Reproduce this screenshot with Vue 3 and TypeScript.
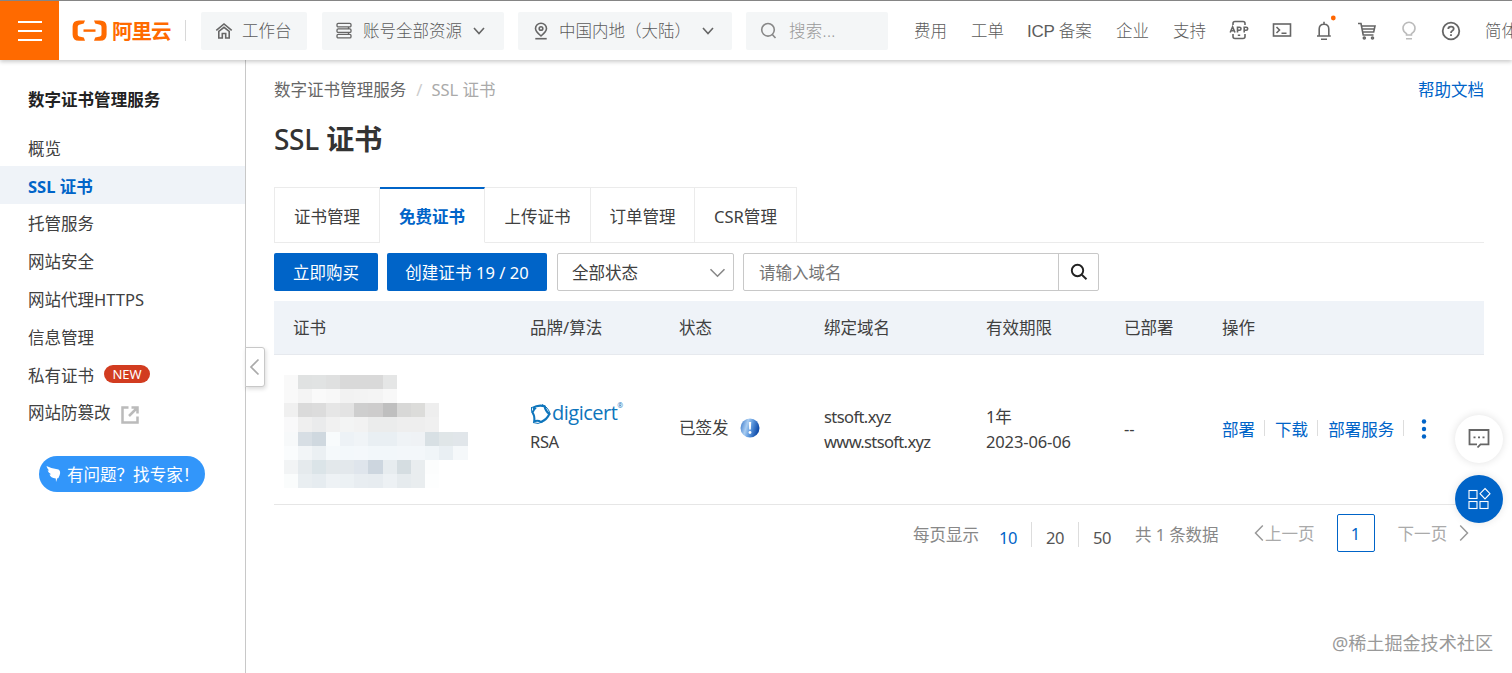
<script setup lang="ts">
interface MenuItem {
  label: string
  active?: boolean
  badge?: string
  external?: boolean
}

const menu: MenuItem[] = [
  { label: '概览' },
  { label: 'SSL 证书', active: true },
  { label: '托管服务' },
  { label: '网站安全' },
  { label: '网站代理HTTPS' },
  { label: '信息管理' },
  { label: '私有证书', badge: 'NEW' },
  { label: '网站防篡改', external: true },
]

const tabs: { label: string; cls: string }[] = [
  { label: '证书管理', cls: 't1' },
  { label: '免费证书', cls: 't2 active' },
  { label: '上传证书', cls: 't3' },
  { label: '订单管理', cls: 't4' },
  { label: 'CSR管理', cls: 't5' },
]

const columns: string[] = ['证书', '品牌/算法', '状态', '绑定域名', '有效期限', '已部署', '操作']

// Pixelated cover over the private certificate name and ids
const mosaic: string[][] = [
  ['f9f9f9', 'e0e2e2', 'e1e3e3', 'dfe0e0', 'd9d9d9', 'd9d9d9', 'd9d9d9', 'e5e6e6', 'fff', 'fff', 'fff', 'fff', 'fff'],
  ['f9f9f9', 'f4f4f4', 'fafafa', 'f8f8f8', 'f2f2f2', 'f3f3f3', 'f4f4f4', 'f8f8f8', 'fff', 'fff', 'fff', 'fff', 'fff'],
  ['f0f0f0', 'dadada', 'dcdcdc', 'e6e6e6', 'e3e3e3', 'cecece', 'cdcccc', 'bfbfbf', 'd8d8d7', 'dcdcda', 'eeeeee', 'fff', 'fff'],
  ['f9f9fa', 'efefef', 'eaebec', 'f1f1f1', 'f3f4f4', 'f2f2f2', 'ebecec', 'ebecec', 'eeeeee', 'eeeeee', 'f0f0f0', 'fff', 'fff'],
  ['f7f9fa', 'd7dee4', 'cfd8df', 'f8fbfc', 'edf2f6', 'f0f4f7', 'e9eff3', 'e9eff3', 'eff3f6', 'eff2f5', 'd8e0e4', 'e0e6e8', 'e1e6ea'],
  ['fafcfd', 'f2f5f7', 'ebf0f3', 'f5f9fb', 'f3f8fb', 'f4f8fb', 'f2f7fa', 'f2f7fa', 'f3f7fa', 'f3f7fa', 'f0f5f8', 'e9eff3', 'f5f8fa'],
  ['f2f4f5', 'e5eaed', 'dbe4e8', 'e3e8eb', 'e3e8ec', 'dfe5ec', 'cdd6df', 'e7ecef', 'd5dde1', 'e9edef', 'fcfdfd', 'fff', 'fff'],
  ['fafcfc', 'e9eef1', 'e6ecf0', 'eef2f5', 'ecf1f4', 'e8edf1', 'e7ecf0', 'edf1f4', 'e6ebee', 'e9edef', 'fdfefe', 'fff', 'fff'],
]
</script>

<template>
  <div class="page">
    <header class="top">
      <div class="burger"><i></i><i></i><i></i></div>
      <div class="logo">
        <svg width="35" height="24" viewBox="0 0 35 24">
          <path d="M13 1.400H7Q0.600 1.400 0.600 7.500V15.500Q0.600 21.800 7 21.800H13L11.800 18.600L7.200 17.500Q5.700 17.100 5.700 15.500V7.700Q5.700 6.100 7.200 5.700L11.800 4.600Z" />
          <path d="M22 1.400H28Q34.600 1.400 34.600 7.500V15.500Q34.600 21.800 28 21.800H22L23.200 18.600L28 17.500Q29.500 17.100 29.500 15.500V7.700Q29.500 6.100 28 5.700L23.200 4.600Z" />
          <rect x="11.500" y="10.400" width="12" height="2.400" />
        </svg>
        <span>阿里云</span>
      </div>
      <div class="vline"></div>
      <div class="pill p1">
        <svg width="18" height="18" viewBox="0 0 18 18" class="ln">
          <path d="M1.300 8.400L9 2L16.700 8.400" /><path d="M3.800 9.500V16H7.300V11.500H10.700V16H14.200V9.500L9 5.300Z" />
        </svg>
        <span>工作台</span>
      </div>
      <div class="pill p2">
        <svg width="18" height="18" viewBox="0 0 18 18" class="ln thinner">
          <rect x="2" y="1.300" width="14" height="3.600" rx="1.200" /><rect x="2" y="6.800" width="14" height="3.600" rx="1.200" /><rect x="2" y="12.300" width="14" height="3.600" rx="1.200" /><path d="M13.500 5V7M13.500 10.500V12.500" />
        </svg>
        <span>账号全部资源</span>
        <svg class="ln chev" width="12" height="8" viewBox="0 0 12 8"><path d="M1 1L6 6.500L11 1" /></svg>
      </div>
      <div class="pill p3">
        <svg width="18" height="18" viewBox="0 0 18 18" class="ln">
          <path d="M9 14Q3.500 9.500 3.500 6.500A5.500 5.300 0 0 1 14.500 6.500Q14.500 9.500 9 14Z" /><circle cx="9" cy="6.500" r="1.800" /><path d="M3.300 16.700H14.700" />
        </svg>
        <span>中国内地（大陆）</span>
        <svg class="ln chev" width="12" height="8" viewBox="0 0 12 8"><path d="M1 1L6 6.500L11 1" /></svg>
      </div>
      <div class="pill p4">
        <svg width="17" height="17" viewBox="0 0 17 17" class="ln"><circle cx="8" cy="7.800" r="6.300" /><path d="M12.300 12.500L15.500 16" /></svg>
        <span>搜索...</span>
      </div>
      <nav class="links">
        <span class="l1">费用</span><span class="l2">工单</span><span class="l3"><b>ICP</b> 备案</span><span class="l4">企业</span><span class="l5">支持</span>
      </nav>
      <div class="icons">
        <svg class="ln i-app" width="20" height="20" viewBox="0 0 20 20">
          <path d="M4 5V3.500Q4 1.500 6 1.500H14Q16 1.500 16 3.500V5M4 14V16.500Q4 18.500 6 18.500H14Q16 18.500 16 16.500V14M8.800 15.300H11.200" />
          <path d="M1.200 12.500L3.600 6.800L6 12.500M2 10.800H5.200M8.500 12.500V7.200H10.500Q12 7.200 12 8.700T10.500 10.200H8.500M15.200 12.500V7.200H17.200Q18.700 7.200 18.700 8.700T17.200 10.200H15.200" />
        </svg>
        <svg class="ln i-cli" width="20" height="16" viewBox="0 0 20 16">
          <rect x="1.500" y="2" width="17" height="12" /><path d="M4.500 5L7.500 8L4.500 11M9.500 11.200H14.500" />
        </svg>
        <svg class="ln i-bell" width="22" height="28" viewBox="0 0 22 28">
          <path d="M2 21H15.800M4.200 21V14Q4.200 9.200 9 9.200Q13.800 9.200 13.800 14V21M9 9V6.800M6 24.300H12" />
          <circle cx="18.300" cy="3" r="2.400" class="dot" />
        </svg>
        <svg class="ln i-cart" width="20" height="20" viewBox="0 0 20 20">
          <path d="M1 2.500H4L6.200 14H16.500M4.800 5H18L16.700 11H6M5.500 8H17.200" /><circle cx="7.300" cy="17" r="1" /><circle cx="15.500" cy="17" r="1" />
        </svg>
        <svg class="ln i-bulb" width="16" height="20" viewBox="0 0 16 20">
          <path d="M5.500 14V12.600Q2 10.500 2 7.200A6 6 0 0 1 14 7.200Q14 10.500 10.500 12.600V14ZM5 17.800H11" />
        </svg>
        <svg class="ln i-help" width="20" height="20" viewBox="0 0 20 20">
          <circle cx="10" cy="10" r="8.300" /><path d="M7.300 8Q7.300 5.600 10 5.600Q12.700 5.600 12.700 7.800Q12.700 9 11.300 9.800Q10 10.500 10 12M10 13.300V15" />
        </svg>
        <span class="lang">简体</span>
      </div>
    </header>

    <div class="body">
      <aside class="side">
        <h2>数字证书管理服务</h2>
        <ul>
          <li v-for="m in menu" :key="m.label" :class="{ active: m.active }">
            <span>{{ m.label }}</span>
            <em v-if="m.badge">{{ m.badge }}</em>
            <svg v-if="m.external" width="18" height="18" viewBox="0 0 18 18">
              <path d="M7.500 1.500H1.500V16.500H16.500V10.500M10.500 1.500H16.500V7.500M16.500 1.500L8 10" />
            </svg>
          </li>
        </ul>
        <div class="ask">
          <svg width="16" height="18" viewBox="0 0 16 18"><path d="M0.500 1Q6 4 12.500 4.500Q15 6 13.700 10L12.300 13.200L11.500 13L10 17L9.800 13.500Q4.500 13 3.500 9.500L5 9.300Q2.300 7.500 1.600 5.500L3 5.500Q1 3.500 0.500 1Z" /></svg>
          <span>有问题？找专家！</span>
        </div>
        <div class="fold">
          <svg width="12" height="18" viewBox="0 0 12 18"><path d="M9.500 1.500L2 9L9.500 16.500" /></svg>
        </div>
      </aside>

      <main>
        <div class="crumbs">
          <span>数字证书管理服务</span><i>/</i><span class="cur">SSL 证书</span>
          <a>帮助文档</a>
        </div>
        <h1><span>SSL</span> 证书</h1>

        <div class="tabs">
          <div v-for="t in tabs" :key="t.label" class="tab" :class="t.cls">{{ t.label }}</div>
        </div>

        <div class="tools">
          <button class="b1">立即购买</button>
          <button class="b2">创建证书 19 / 20</button>
          <div class="select">
            <span>全部状态</span>
            <svg width="17" height="10" viewBox="0 0 17 10"><path d="M1.500 1.200L8.500 8.200L15.500 1.200" /></svg>
          </div>
          <div class="search">
            <span>请输入域名</span>
            <div><svg width="18" height="18" viewBox="0 0 18 18"><circle cx="7.500" cy="7.500" r="5.700" /><path d="M11.800 11.800L16.500 16.300" /></svg></div>
          </div>
        </div>

        <div class="row thead">
          <span v-for="c in columns" :key="c">{{ c }}</span>
        </div>
        <div class="row trow">
          <div class="mosaic">
            <template v-for="(line, r) in mosaic" :key="r">
              <i v-for="(c, k) in line" :key="k" :style="{ background: '#' + c }"></i>
            </template>
          </div>
          <div class="brand">
            <div class="digi">
              <svg width="22" height="22" viewBox="0 0 22 22">
                <path d="M2.500 5Q8 1.500 14.500 3.200Q15.500 8 19.300 11Q17 16.500 11 19Q8 17 4.200 18.300Q5 13 2.500 9.500Q3.500 6.500 6 4.500" />
                <path d="M12 1.500Q18.500 4 20.300 11.500M3 19.500Q8 21.800 13 18.700M1.500 4Q.7 8 3 11.500" class="thin" />
              </svg>
              <span>digicert</span><sup>®</sup>
            </div>
            <div class="alg">RSA</div>
          </div>
          <div class="state">
            <span>已签发</span>
            <svg width="20" height="20" viewBox="0 0 20 20">
              <defs><linearGradient id="orb" x1="0" y1="0" x2="1" y2="0.300"><stop offset="0" stop-color="#2f6fc4" /><stop offset=".4" stop-color="#a9cdf2" /><stop offset=".65" stop-color="#5b97dd" /><stop offset="1" stop-color="#1450ac" /></linearGradient></defs>
              <circle cx="10" cy="10" r="9.500" fill="url(#orb)" /><path d="M8.800 4H11.200L10.800 11.500H9.200Z" fill="#fff" /><circle cx="10" cy="14.500" r="1.400" fill="#fff" />
            </svg>
          </div>
          <div class="two domain"><div class="d1">stsoft.xyz</div><div>www.stsoft.xyz</div></div>
          <div class="two date"><div>1年</div><div>2023-06-06</div></div>
          <div class="dash">--</div>
          <div class="ops">
            <a>部署</a><i></i><a>下载</a><i></i><a>部署服务</a><i></i>
            <svg width="6" height="20" viewBox="0 0 6 20"><circle cx="3" cy="2.500" r="2.200" /><circle cx="3" cy="10" r="2.200" /><circle cx="3" cy="17.500" r="2.200" /></svg>
          </div>
        </div>

        <div class="pager">
          <span class="per">每页显示</span>
          <span class="num on">10</span><i></i><span class="num">20</span><i></i><span class="num">50</span>
          <span class="total">共 1 条数据</span>
          <span class="prev"><svg width="10" height="18" viewBox="0 0 10 18"><path d="M8.800 1.500L1.500 9L8.800 16.500" /></svg><b>上一页</b></span>
          <span class="now">1</span>
          <span class="next"><b>下一页</b><svg width="10" height="18" viewBox="0 0 10 18"><path d="M1.200 1.500L8.500 9L1.200 16.500" /></svg></span>
        </div>
      </main>
    </div>

    <div class="float chat">
      <svg width="24" height="24" viewBox="0 0 24 24"><path d="M10 17.300H2.500V3H21.500V17.300H13.500L10.500 20.500" /><path d="M6.500 10.300H8.500M11 10.300H13M15.500 10.300H17.500" /></svg>
    </div>
    <div class="float apps">
      <svg width="24" height="24" viewBox="0 0 24 24"><rect x="2" y="3.500" width="8" height="8" /><rect x="2" y="14.500" width="8" height="7" /><rect x="13" y="14.500" width="8" height="7" /><path d="M18 1.500L23 6.700L18 12L13 6.700Z" /></svg>
    </div>
    <div class="mark">@稀土掘金技术社区</div>
  </div>
</template>

<style>
body { overflow: hidden; }
</style>

<style scoped>
* { box-sizing: border-box; }
.page {
  position: relative; width: 1512px; height: 673px; overflow: hidden; background: #fff;
  font-family: "Noto Sans", "Noto Sans CJK SC", sans-serif; font-size: 16.550px; color: #404040; line-height: 24px; white-space: nowrap;
}
svg { display: block; flex: none; fill: none; }
i, em { font-style: normal; }
.top {
  position: relative; z-index: 2; height: 60px; display: flex; align-items: center; background: #fff;
  border-top: 1px solid #858585; box-shadow: 0 2px 4px rgba(0, 0, 0, .2); color: #5c5c5c; font-weight: 300; font-size: 16.500px;
}
.top span { flex: none; }
.ln { stroke: #666; stroke-width: 1.600; }
.thinner { stroke-width: 1.300; }
.burger { width: 59px; height: 59px; flex: none; background: #ff6a00; display: flex; flex-direction: column; gap: 7px; align-items: center; justify-content: center; }
.burger i { width: 24px; height: 2px; background: #fff; }
.logo { display: flex; align-items: center; margin-left: 13px; width: 101px; flex: none; color: #ff6a00; }
.logo svg { fill: #ff6a00; }
.logo span { font-weight: 700; font-size: 20.500px; letter-spacing: -1px; margin-left: 5px; }
.vline { width: 1px; height: 21px; background: #d8d8d8; margin-left: 12px; flex: none; }
.pill { height: 38px; flex: none; background: #f4f6f7; border-radius: 2px; display: flex; align-items: center; }
.p1 { width: 106px; margin-left: 15px; padding-left: 14px; }
.p1 span { margin-left: 9px; }
.p2 { width: 182px; margin-left: 15px; padding-left: 13px; }
.p2 span { margin-left: 10px; }
.p2 .chev { margin-left: 11px; }
.p3 { width: 214px; margin-left: 14px; padding-left: 14px; }
.p3 span { margin-left: 9px; width: 132px; }
.p3 .chev { margin-left: 11px; }
.p4 { width: 142px; margin-left: 14px; padding-left: 14px; color: #999; }
.p4 .ln { stroke: #888; }
.p4 span { margin-left: 12px; letter-spacing: .300px; }
.links { display: flex; flex: none; margin-left: 26px; }
.links b { font: 400 17px "Liberation Sans", sans-serif; letter-spacing: -.300px; }
.l1 { width: 57px; }
.l2 { width: 56px; }
.l4 { width: 57px; }
.l3 { width: 89px; }
.l5 { width: 33px; }
.icons { display: flex; align-items: center; flex: none; height: 59px; }
.i-app { margin-left: 23px; margin-top: -1px; }
.i-cli { margin-left: 23px; margin-top: -1px; }
.i-bell { margin-left: 23px; margin-top: -4px; }
.i-cart { margin-left: 20px; margin-top: 0; }
.i-bell .dot { fill: #f60; stroke: none; }
.i-bulb { margin-left: 24px; stroke: #bbb; }
.i-help { margin-left: 24px; stroke-width: 1.800; }
.lang { margin-left: 24px; }

.body { display: flex; height: 613px; }
.side { position: relative; width: 246px; flex: none; border-right: 1px solid #c8c8c8; }
.side h2 { margin: 28px 0 16px 28px; font-size: 16.550px; line-height: 24px; font-weight: 700; color: #222; }
.side ul { list-style: none; margin: 0; padding: 0; }
.side li { height: 37.800px; padding: 3px 0 0 28px; display: flex; align-items: center; }
.side li span { margin-top: 1px; letter-spacing: -.010px; }
.side li.active { background: #eff3f8; color: #0064c8; font-weight: 700; letter-spacing: -.100px; }
.side em { margin: -2px 0 0 10px; width: 46px; height: 18px; border-radius: 9px; background: #d23c20; color: #fff; font-size: 13px; line-height: 18px; text-align: center; }
.side li svg { margin: 4px 0 0 10px; stroke: #bbb; stroke-width: 2.500; }
.ask { width: 166px; height: 36px; margin: 26px 0 0 39px; border-radius: 18px; background: #3296fa; color: #fff; display: flex; align-items: center; padding-left: 7px; }
.ask svg { fill: #fff; }
.ask span { margin: 2px 0 0 5px; }
.fold { position: absolute; left: 245px; top: 287px; width: 20px; height: 40px; border: 1px solid #c8c8c8; border-radius: 0 3px 3px 0; background: #fff; box-shadow: 1px 2px 4px rgba(0, 0, 0, .15); display: flex; align-items: center; justify-content: center; }
.fold svg { stroke: #aaa; stroke-width: 1.700; }

main { width: 1210px; margin-left: 28px; }
.crumbs { display: flex; margin-top: 18px; color: #666; }
.crumbs i { color: #ccc; margin: 0 9px 0 10px; }
.crumbs .cur { color: #aaa; }
.crumbs a { margin-left: auto; color: #0064c8; }
a { color: #0064c8; }
h1 { margin: 17px 0 0; height: 40px; line-height: 40px; font-size: 28px; font-weight: 700; color: #333; }
h1 span { font-weight: 500; letter-spacing: -.300px; }
.tabs { display: flex; margin-top: 28px; height: 56px; border-bottom: 1px solid #ebebeb; }
.tab { height: 56px; border: 1px solid #ebebeb; border-left: 0; text-align: center; line-height: 57px; background: #fff; }
.t1 { width: 106px; border-left: 1px solid #ebebeb; }
.t2, .t3, .t4 { width: 105px; }
.t3 { width: 106px; }
.t4 { width: 104px; }
.t5 { width: 102px; }
.tab.active { border-top: 2px solid #0064c8; border-bottom-color: #fff; color: #0064c8; font-weight: 700; line-height: 56px; }
.tools { display: flex; margin-top: 10px; height: 38px; }
button { border: 0; padding: 2px 0 0; border-radius: 2px; background: #0064c8; color: #fff; font: inherit; }
.b1 { width: 104px; }
.b2 { width: 160px; margin-left: 9px; letter-spacing: .050px; }
.select { width: 177px; margin-left: 10px; border: 1px solid #c8c8c8; border-radius: 2px; padding: 1px 7px 0 14px; display: flex; align-items: center; justify-content: space-between; }
.select svg { stroke: #888; stroke-width: 1.600; }
.search { width: 356px; margin-left: 9px; border: 1px solid #c8c8c8; border-radius: 2px; display: flex; align-items: center; padding-left: 15px; color: #757575; }
.search span { margin-top: 2px; }
.search div { margin-left: auto; width: 40px; height: 36px; border-left: 1px solid #c8c8c8; display: flex; align-items: center; justify-content: center; }
.search svg { stroke: #222; stroke-width: 1.900; }
.row { display: grid; grid-template-columns: 237px 149px 145px 162px 138px 98px 1fr; padding-left: 19px; align-items: center; }
.thead { margin-top: 10px; height: 54px; background: #eff3f8; border-bottom: 1px solid #e6e9ee; }
.trow { height: 150px; border-bottom: 1px solid #e6e6e6; }
.mosaic { display: grid; grid-template-columns: repeat(13, 14.170px); grid-auto-rows: 14.200px; margin-left: -9.500px; margin-top: 4px; }
.brand { line-height: 25px; margin-top: -4px; }
.alg { letter-spacing: -.400px; }
.digi { display: flex; color: #0e75bc; height: 28px; align-items: center; }
.digi svg { stroke: #0e75bc; stroke-width: 2.100; margin-top: -3px; }
.digi .thin { stroke-width: 1; }
.digi span { font: 500 20px/24px "Open Sans", sans-serif; letter-spacing: -.500px; margin-top: -5px; }
.digi sup { font-size: 7px; line-height: 8px; align-self: flex-start; margin-top: 1px; }
.state { display: flex; align-items: center; gap: 11px; margin-top: -4px; }
.two { line-height: 25px; margin-top: -1px; }
.domain { letter-spacing: -.660px; }
.d1 { letter-spacing: -.600px; }
.date { letter-spacing: -.150px; }
.dash { margin-top: -1px; }
.ops { display: flex; align-items: center; }
.ops i { width: 1px; height: 16px; background: #ddd; margin: -3px 10px 0 9px; }
.ops svg { fill: #0064c8; margin-left: 7px; margin-top: -1px; }
.pager { display: flex; align-items: center; margin-left: 639px; height: 38px; margin-top: 9px; color: #888; }
.pager i { width: 1px; height: 25px; background: #ddd; margin: 3px 14px 0 13px; }
.pager b { font-weight: inherit; margin-top: 2px; }
.num { margin-top: 9px; color: #555; width: 19px; letter-spacing: -.400px; }
.per { width: 86px; margin-top: 3px; }
.on { color: #0064c8; }
.total { margin: 3px 0 0 23px; width: 85px; letter-spacing: -.100px; }
.pager svg { stroke: #999; stroke-width: 1.500; }
.prev, .next { display: flex; align-items: center; color: #aaa; }
.prev { margin-left: 34px; }
.prev b { margin-left: 1px; }
.now { width: 38px; height: 38px; margin: 0 23px 0 22px; border: 1px solid #0064c8; border-radius: 2px; color: #0064c8; text-align: center; line-height: 38px; flex: none; }
.next svg { margin-left: 12px; }
.float { position: absolute; left: 1455px; width: 48px; height: 48px; border-radius: 50%; display: flex; align-items: center; justify-content: center; }
.chat { top: 415px; background: #fff; box-shadow: 0 0 8px rgba(0, 0, 0, .12); }
.chat svg { stroke: #666; stroke-width: 1.800; }
.apps { top: 475px; background: #0064c8; box-shadow: 0 0 8px rgba(0, 0, 0, .1); }
.apps svg { stroke: #fff; stroke-width: 1.100; }
.mark { position: absolute; right: 19px; top: 631px; font-size: 18.100px; color: #999; }
</style>
